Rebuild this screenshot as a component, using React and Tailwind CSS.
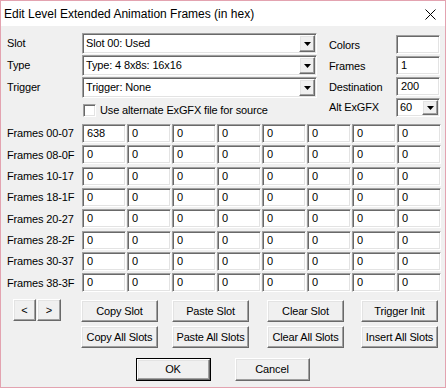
import React from 'react';

const font = { fontFamily: '"Liberation Sans", Arial, sans-serif' };

const sunken =
  'border border-t-[#a0a0a0] border-l-[#a0a0a0] border-r-white border-b-white shadow-[inset_1px_1px_0_#696969,inset_-1px_-1px_0_#e3e3e3] bg-white';

const raised =
  'border border-t-white border-l-white border-r-[#696969] border-b-[#696969] shadow-[inset_-1px_-1px_0_#a0a0a0,inset_1px_1px_0_#e3e3e3] bg-[#f0f0f0]';

const Arrow = () => (
  <svg width="7" height="4" viewBox="0 0 7 4">
    <path d="M0 0h7L3.5 4z" fill="#000" />
  </svg>
);

const DropButton = () => (
  <div className={`${raised} w-[16px] h-full flex items-center justify-center`}>
    <Arrow />
  </div>
);

const Combo = ({ value, width = 'w-[235px]', height = 'h-[21px]' }) => (
  <div className={`${sunken} ${width} ${height} flex items-stretch p-[1px]`}>
    <div className="flex-1 flex items-center pl-[2px] leading-none">{value}</div>
    <DropButton />
  </div>
);

const Cell = ({ value }) => (
  <div className={`${sunken} w-[44px] h-[19px] flex items-center pl-[4px] leading-none`}>{value}</div>
);

const Button = ({ children, className = '' }) => (
  <button className={`${raised} flex items-center justify-center leading-none text-black ${className}`}>
    {children}
  </button>
);

const rows = ['00-07', '08-0F', '10-17', '18-1F', '20-27', '28-2F', '30-37', '38-3F'];

const ButtonColumn = ({ top, bottom, className }) => (
  <div className={`flex flex-col gap-[4px] ${className}`}>
    <Button className="w-[77px] h-[22px]">{top}</Button>
    <Button className="w-[77px] h-[22px]">{bottom}</Button>
  </div>
);

export default function App() {
  return (
    <div
      className="w-[446px] h-[388px] border border-[#e3a3b0] bg-[#f0f0f0] flex flex-col overflow-hidden text-[11px] tracking-[-0.15px] text-black"
      style={font}
    >
      {/* title bar */}
      <div className="h-[25px] bg-white flex items-center justify-between pl-[3px] pr-[9px] tracking-normal">
        <span className="text-[12px]">Edit Level Extended Animation Frames (in hex)</span>
        <svg width="11" height="11" viewBox="0 0 11 11" className="mt-[1px]">
          <path d="M0.5 0.5l10 10M10.5 0.5l-10 10" stroke="#000" strokeWidth="1" />
        </svg>
      </div>

      <div className="flex flex-col pl-[6px] pt-[7px]">
        {/* top section */}
        <div className="flex">
          <div className="flex flex-col gap-[1px]">
            <div className="flex items-center">
              <span className="w-[75px] -mt-[1px]">Slot</span>
              <Combo value="Slot 00: Used" />
            </div>
            <div className="flex items-center">
              <span className="w-[75px] -mt-[1px]">Type</span>
              <Combo value="Type: 4 8x8s: 16x16" />
            </div>
            <div className="flex items-center">
              <span className="w-[75px] -mt-[1px]">Trigger</span>
              <Combo value="Trigger: None" />
            </div>
            <div className="flex items-center mt-[5px] pl-[76px]">
              <div className={`${sunken} w-[13px] h-[13px]`} />
              <span className="ml-[4px] leading-none">Use alternate ExGFX file for source</span>
            </div>
          </div>

          <div className="flex flex-col gap-[2px] pt-[2px] ml-[12px]">
            <div className="flex items-center">
              <span className="w-[67px] mt-[2px]">Colors</span>
              <Cell value="" />
            </div>
            <div className="flex items-center">
              <span className="w-[67px] mt-[2px]">Frames</span>
              <Cell value="1" />
            </div>
            <div className="flex items-center">
              <span className="w-[67px] mt-[2px]">Destination</span>
              <Cell value="200" />
            </div>
            <div className="flex items-center">
              <span className="w-[67px]">Alt ExGFX</span>
              <Combo value="60" width="w-[44px]" height="h-[19px]" />
            </div>
          </div>
        </div>

        {/* frames grid */}
        <div className="flex flex-col gap-y-[2.33px] mt-[7px]">
          {rows.map((r, i) => (
            <div key={r} className="flex items-center">
              <span className="w-[75px]">Frames {r}</span>
              <div className="flex gap-[1px]">
                {Array.from({ length: 8 }).map((_, j) => (
                  <Cell key={j} value={i === 0 && j === 0 ? '638' : '0'} />
                ))}
              </div>
            </div>
          ))}
        </div>

        {/* buttons */}
        <div className="flex mt-[8px]">
          <div className="flex gap-[1px] ml-[6px] self-start -mt-[1px]">
            <Button className="w-[23px] h-[22px]">&lt;</Button>
            <Button className="w-[24px] h-[22px]">&gt;</Button>
          </div>
          <ButtonColumn top="Copy Slot" bottom="Copy All Slots" className="ml-[20px]" />
          <ButtonColumn top="Paste Slot" bottom="Paste All Slots" className="ml-[14px]" />
          <ButtonColumn top="Clear Slot" bottom="Clear All Slots" className="ml-[18px]" />
          <ButtonColumn top="Trigger Init" bottom="Insert All Slots" className="ml-[17px]" />
        </div>
      </div>

      <div className="flex justify-center gap-[24px] mt-[10px] pr-[1px]">
        <div className="border border-black">
          <Button className="w-[73px] h-[21px]">OK</Button>
        </div>
        <Button className="w-[75px] h-[23px]">Cancel</Button>
      </div>
    </div>
  );
}
